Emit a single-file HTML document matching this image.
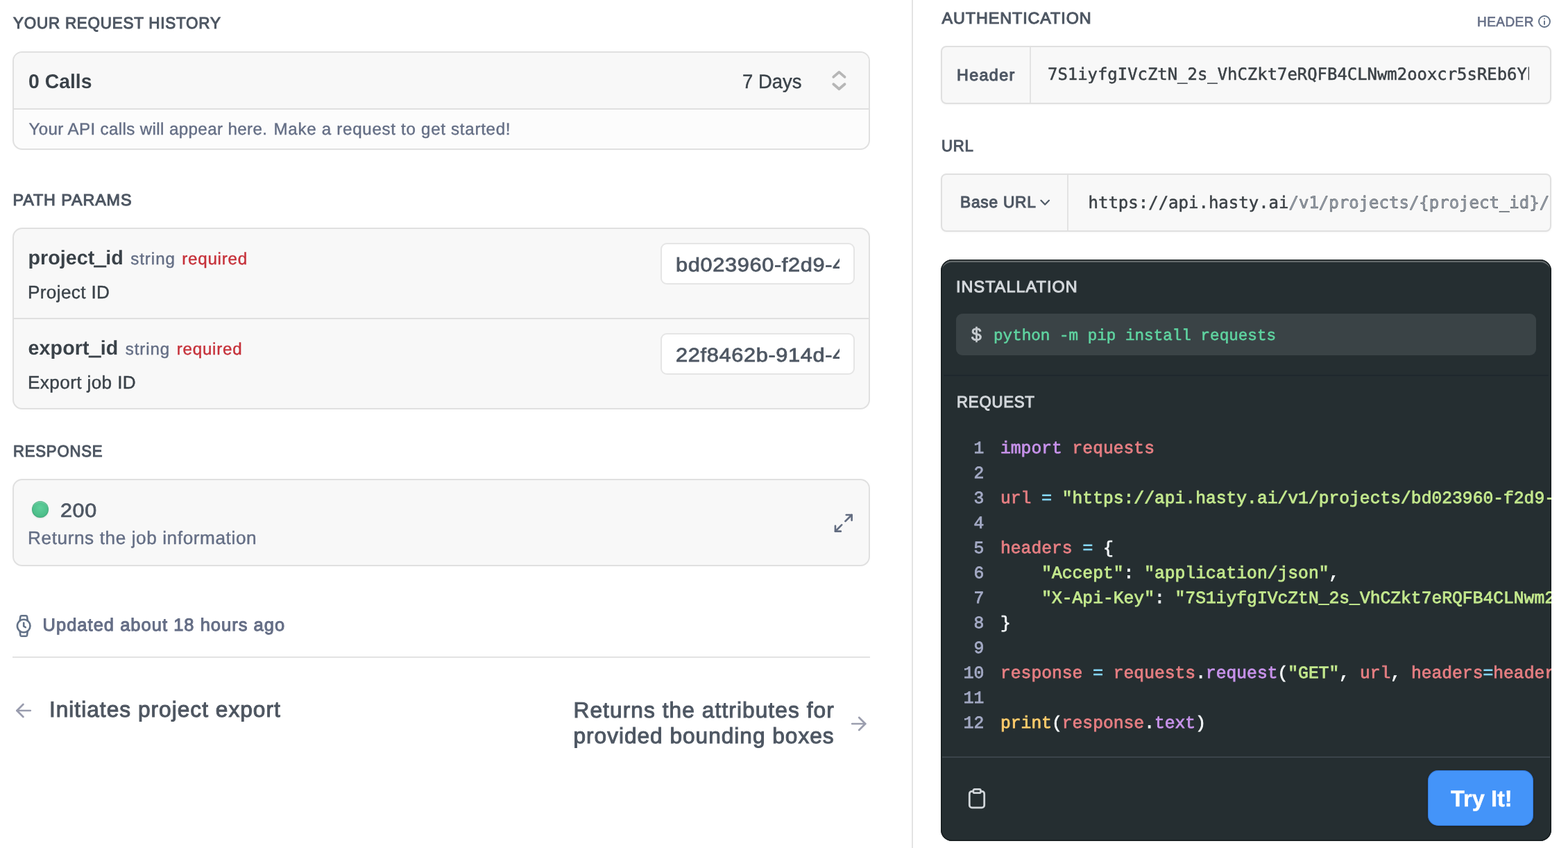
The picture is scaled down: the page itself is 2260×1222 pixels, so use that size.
<!DOCTYPE html>
<html lang="en">
<head>
<meta charset="utf-8">
<title>Returns the job information</title>
<style>
*{box-sizing:border-box;margin:0;padding:0}
html,body{width:2260px;height:1222px;overflow:hidden;background:#fff}
body{position:relative;font-family:"Liberation Sans",sans-serif;color:#384248;-webkit-font-smoothing:antialiased;text-rendering:geometricPrecision}
.a{position:absolute;white-space:nowrap;line-height:1}
.mono{font-family:"Liberation Mono",monospace}
.dmono{font-family:"DejaVu Sans Mono","Liberation Mono",monospace}
.card{position:absolute;left:18px;width:1236px;border:2px solid #e0e0e0;border-radius:14px;background:#f8f8f8;overflow:hidden}
.box{position:absolute;left:1356px;width:880px;height:84px;border:2px solid #e0e0e0;border-radius:8px;box-shadow:0 1px 3px rgba(0,0,0,.04);background:#f8f8f8;overflow:hidden}
.inp{position:absolute;left:952px;width:280px;height:60px;border:2px solid #e5e5e5;border-radius:9px;background:#fff}
.clip{position:absolute;overflow:hidden}
svg{position:absolute;overflow:visible}
#panel{position:absolute;left:1356px;top:374px;width:880px;height:838px;border-radius:16px;background:#252e31;overflow:hidden;box-shadow:inset 0 0 0 1.5px #161c1e, inset 0 4px 0 0 rgba(255,255,255,.27)}
.ln,.cl{position:absolute;font-family:"Liberation Mono",monospace;font-size:24.67px;line-height:36px;height:36px;white-space:pre;-webkit-text-stroke:.8px currentColor}
.ln{left:0;width:62.3px;text-align:right;color:#a3a9c4}
.cl{left:86px;color:#f4f8fa}
.k{color:#c792ea}.v{color:#e57e82}.o{color:#89ddff}.s{color:#c3e88d}.d{color:#ffcb6b}
</style>
</head>
<body>
<div id="root" style="position:absolute;left:0;top:0;width:2260px;height:1222px;will-change:transform">

<!-- ============ LEFT COLUMN ============ -->
<div class="a" id="h1" style="left:19.31px;top:22.00px;font-size:23.36px;color:#4e5763;letter-spacing:0.802px;transform:scaleX(0.9604);transform-origin:0 0;-webkit-text-stroke:1.07px #4e5763;">YOUR REQUEST HISTORY</div>
<div class="card" style="top:74px;height:142px;background:#fcfcfc">
  <div style="position:absolute;left:0;top:0;width:100%;height:82px;background:#f8f8f8;border-bottom:2px solid #e0e0e0"></div>
</div>
<div class="a" id="calls" style="left:40.51px;top:104.00px;font-size:28.7px;font-weight:700;color:#3a4249;transform:scaleX(0.9885);transform-origin:0 0;">0 Calls</div>
<div class="a" id="days" style="left:1069.97px;top:103.00px;font-size:28.23px;color:#3a4249;transform:scaleX(0.9728);transform-origin:0 0;-webkit-text-stroke:0.4px #3a4249;">7 Days</div>
<svg style="left:1197px;top:99px" width="25" height="34" viewBox="0 0 25 34" fill="none" stroke="#b6b6b6" stroke-width="3.8" stroke-linecap="round" stroke-linejoin="round"><path d="M4.3 11.9 L12.4 4.9 L20.5 11.9"/><path d="M4.3 22.2 L12.4 29.2 L20.5 22.2"/></svg>
<div class="a" id="api1" style="left:41.40px;top:175.00px;font-size:24.13px;color:#646e85;letter-spacing:0.384px;-webkit-text-stroke:0.4px #646e85;">Your API calls will appear here.</div><div class="a" id="api2" style="left:394.50px;top:175.00px;font-size:24.13px;color:#646e85;letter-spacing:0.707px;-webkit-text-stroke:0.4px #646e85;">Make a request to get started!</div>

<div class="a" id="h2" style="left:18.54px;top:277.00px;font-size:23.36px;color:#4e5763;letter-spacing:0.877px;-webkit-text-stroke:1.07px #4e5763;">PATH PARAMS</div>
<div class="card" style="top:328px;height:262px">
  <div style="position:absolute;left:0;top:128px;width:100%;height:2px;background:#e0e0e0"></div>
</div>
<div class="a" id="pn1" style="left:40.50px;top:358.00px;font-size:28.7px;font-weight:700;color:#3a4249;letter-spacing:0.020px;">project<span style="-webkit-text-stroke:1.7px #3a4249">_</span>id</div><div class="a" id="pt1" style="left:188.20px;top:362.00px;font-size:24.13px;color:#646e85;letter-spacing:0.955px;-webkit-text-stroke:0.4px #646e85;">string</div><div class="a" id="pr1" style="left:262.20px;top:362.00px;font-size:24.13px;color:#c6313a;letter-spacing:0.786px;-webkit-text-stroke:0.4px #c6313a;">required</div><div class="a" id="pd1" style="left:40.00px;top:408.00px;font-size:26.18px;color:#3a4249;letter-spacing:0.334px;-webkit-text-stroke:0.4px #3a4249;">Project ID</div>
<div class="a" id="pn2" style="left:40.50px;top:488.00px;font-size:28.7px;font-weight:700;color:#3a4249;letter-spacing:0.081px;">export<span style="-webkit-text-stroke:1.7px #3a4249">_</span>id</div><div class="a" id="pt2" style="left:180.70px;top:492.00px;font-size:24.13px;color:#646e85;letter-spacing:0.905px;-webkit-text-stroke:0.4px #646e85;">string</div><div class="a" id="pr2" style="left:254.70px;top:492.00px;font-size:24.13px;color:#c6313a;letter-spacing:0.786px;-webkit-text-stroke:0.4px #c6313a;">required</div><div class="a" id="pd2" style="left:40.00px;top:538.00px;font-size:26.18px;color:#3a4249;letter-spacing:0.368px;-webkit-text-stroke:0.4px #3a4249;">Export job ID</div>
<div class="inp" style="top:350px"></div>
<div class="inp" style="top:480px"></div>
<div class="clip" style="left:965px;top:355px;width:245px;height:50px"><div class="a" id="in1" style="left:9.34px;top:13.00px;font-size:27.77px;color:#4e5763;letter-spacing:0.600px;transform:scaleX(1.1061);transform-origin:0 0;-webkit-text-stroke:0.8px #4e5763;">bd023960-f2d9-4b6c-a1f7-3e5d8c9b2a10</div></div>
<div class="clip" style="left:965px;top:485px;width:245px;height:50px"><div class="a" id="in2" style="left:9.34px;top:13.00px;font-size:27.77px;color:#4e5763;letter-spacing:0.600px;transform:scaleX(1.1061);transform-origin:0 0;-webkit-text-stroke:0.8px #4e5763;">22f8462b-914d-4e2a-b3c8-7d1f6a9e0c54</div></div>

<div class="a" id="h3" style="left:19.06px;top:639.00px;font-size:23.36px;color:#4e5763;letter-spacing:0.802px;transform:scaleX(0.9487);transform-origin:0 0;-webkit-text-stroke:1.07px #4e5763;">RESPONSE</div>
<div class="card" style="top:690px;height:126px"></div>
<div class="a" style="left:46px;top:722px;width:24px;height:24px;border-radius:50%;background:radial-gradient(circle at 50% 40%,#5fcf9b 0%,#4fc08c 55%,#43b07e 100%);box-shadow:0 1px 2px rgba(0,0,0,.12), inset 0 0 0 1px rgba(40,140,95,.35), inset 0 2px 1px rgba(255,255,255,.25)"></div>
<div class="a" id="c200" style="left:86.80px;top:722.00px;font-size:27.86px;color:#4e5763;letter-spacing:0.540px;transform:scaleX(1.0954);transform-origin:0 0;-webkit-text-stroke:0.72px #4e5763;">200</div>
<div class="a" id="rdesc" style="left:40.00px;top:762.00px;font-size:26.18px;color:#646e85;letter-spacing:0.591px;-webkit-text-stroke:0.4px #646e85;">Returns the job information</div>
<svg style="left:1200.2px;top:737.6px" width="31.6" height="31.6" viewBox="0 0 24 24" fill="none" stroke="#626c80" stroke-width="2" stroke-linecap="round" stroke-linejoin="round"><path d="M15 3h6v6"/><path d="M9 21H3v-6"/><path d="M21 3l-7 7"/><path d="M3 21l7-7"/></svg>

<svg style="left:20px;top:884px" width="28" height="36" viewBox="0 0 28 36" fill="none" stroke="#637288" stroke-width="2.6" stroke-linecap="round" stroke-linejoin="round"><circle cx="14.2" cy="18" r="9.3"/><path d="M14.2 13.6v4.8l2.6 1.6"/><path d="M8.6 10.4 L9.4 4.6 Q9.7 3.2 11.2 3.2 H17.2 Q18.7 3.2 19 4.6 L19.8 10.4"/><path d="M8.6 25.6 L9.4 31.4 Q9.7 32.8 11.2 32.8 H17.2 Q18.7 32.8 19 31.4 L19.8 25.6"/></svg>
<div class="a" id="upd" style="left:61.50px;top:889.00px;font-size:25.49px;color:#656e86;letter-spacing:1.025px;-webkit-text-stroke:1.0px #656e86;">Updated about 18 hours ago</div>

<div class="a" style="left:18px;top:946px;width:1236px;height:2px;background:#e3e3e3"></div>

<svg style="left:20.4px;top:1009.6px" width="28" height="28" viewBox="0 0 28 28" fill="none" stroke="#999cae" stroke-width="2.7" stroke-linecap="round" stroke-linejoin="round"><path d="M23.8 14H4.4"/><path d="M13.4 5 L4.4 14 L13.4 23"/></svg>
<div class="a" id="prev" style="left:70.90px;top:1007.00px;font-size:31.64px;color:#4e5661;letter-spacing:1.022px;-webkit-text-stroke:1.0px #4e5661;">Initiates project export</div>
<div class="a" id="next1" style="left:826.50px;top:1008.00px;font-size:31.64px;color:#4e5763;letter-spacing:1.089px;-webkit-text-stroke:1.0px #4e5763;">Returns the attributes for</div>
<div class="a" id="next2" style="left:826.50px;top:1045.00px;font-size:31.64px;color:#4e5763;letter-spacing:0.984px;-webkit-text-stroke:1.0px #4e5763;">provided bounding boxes</div>
<svg style="left:1224px;top:1028.6px" width="28" height="28" viewBox="0 0 28 28" fill="none" stroke="#9b9eae" stroke-width="2.7" stroke-linecap="round" stroke-linejoin="round"><path d="M4.2 14H23.2"/><path d="M14.2 5 L23.2 14 L14.2 23"/></svg>

<!-- column divider -->
<div class="a" style="left:1314px;top:0;width:2px;height:1222px;background:#e3e3e3"></div>

<!-- ============ RIGHT COLUMN ============ -->
<div class="a" id="h4" style="left:1357.54px;top:15.00px;font-size:23.36px;color:#4e5763;letter-spacing:0.903px;-webkit-text-stroke:1.07px #4e5763;">AUTHENTICATION</div>
<div class="a" id="hdr" style="left:2129.03px;top:23.00px;font-size:19.8px;color:#656e86;letter-spacing:0.450px;transform:scaleX(0.9619);transform-origin:0 0;-webkit-text-stroke:0.6px #656e86;">HEADER</div>
<svg style="left:2216px;top:21px" width="20" height="20" viewBox="0 0 20 20" fill="none" stroke="#637288" stroke-width="1.9" stroke-linecap="round"><circle cx="10" cy="10" r="8"/><path d="M10 9.4v4.6"/><path d="M10 6v.1"/></svg>

<div class="box" style="top:66px">
  <div style="position:absolute;left:126px;top:0;width:2px;height:100%;background:#e3e3e3"></div>
</div>
<div class="a" id="lhdr" style="left:1379.04px;top:97.00px;font-size:23.36px;color:#4e5763;letter-spacing:1.319px;-webkit-text-stroke:1.07px #4e5763;">Header</div>
<div class="clip dmono" style="left:1500px;top:80px;width:704px;height:56px"><div class="a" id="key" style="left:10px;top:15.5px;font-size:23.92px;color:#3b4146;-webkit-text-stroke:.5px #3b4146">7S1iyfgIVcZtN_2s_VhCZkt7eRQFB4CLNwm2ooxcr5sREb6YhP3kWq</div></div>

<div class="a" id="h5" style="left:1356.56px;top:199.00px;font-size:23.36px;color:#4e5763;letter-spacing:0.802px;transform:scaleX(0.9501);transform-origin:0 0;-webkit-text-stroke:1.07px #4e5763;">URL</div>
<div class="box" style="top:250px">
  <div style="position:absolute;left:180px;top:0;width:2px;height:100%;background:#e3e3e3"></div>
</div>
<div class="a" id="burl" style="left:1383.55px;top:280.00px;font-size:23.36px;color:#4e5763;letter-spacing:0.802px;transform:scaleX(0.9718);transform-origin:0 0;-webkit-text-stroke:1.07px #4e5763;">Base URL</div>
<svg style="left:1497px;top:284px" width="18" height="16" viewBox="0 0 18 16" fill="none" stroke="#4f5a66" stroke-width="2.2" stroke-linecap="round" stroke-linejoin="round"><path d="M3.4 4.8 L9.2 10.8 L15 4.8"/></svg>
<div class="clip dmono" style="left:1560px;top:264px;width:674px;height:56px"><div class="a" id="url" style="left:8.5px;top:15.5px;font-size:24px;color:#3b4146;-webkit-text-stroke:.5px #3b4146">https://api.hasty.ai<span style="color:#9ba3af">/v1/projects/{project_id}/exports/{export_id}</span></div></div>

<div id="panel">
  <div class="a" style="left:22px;top:77.5px;width:836px;height:60.5px;border-radius:9px;background:#3a4346"></div>
  <div class="a" style="left:4px;top:166px;width:872px;height:1.5px;background:#1f282d"></div>
  <div class="a mono" id="pip" style="left:76px;top:98.6px;font-size:22.62px;color:#5fd3a0;-webkit-text-stroke:.6px #5fd3a0">python -m pip install requests</div>

  <div class="ln" style="top:255px">1</div><div class="cl" id="l1" style="top:255px"><span class="k">import</span> <span class="v">requests</span></div>
  <div class="ln" style="top:291px">2</div>
  <div class="ln" style="top:327px">3</div><div class="cl" id="l3" style="top:327px"><span class="v">url</span> <span class="o">=</span> <span class="s">"https://api.hasty.ai/v1/projects/bd023960-f2d9-4b6c-a1f7-3e5d8c9b2a10/exports/22f8462b-914d-4e2a-b3c8-7d1f6a9e0c54"</span></div>
  <div class="ln" style="top:363px">4</div>
  <div class="ln" style="top:399px">5</div><div class="cl" id="l5" style="top:399px"><span class="v">headers</span> <span class="o">=</span> {</div>
  <div class="ln" style="top:435px">6</div><div class="cl" id="l6" style="top:435px">    <span class="s">"Accept"</span>: <span class="s">"application/json"</span>,</div>
  <div class="ln" style="top:471px">7</div><div class="cl" id="l7" style="top:471px">    <span class="s">"X-Api-Key"</span>: <span class="s">"7S1iyfgIVcZtN_2s_VhCZkt7eRQFB4CLNwm2ooxcr5sREb6YhP3kWq"</span></div>
  <div class="ln" style="top:507px">8</div><div class="cl" id="l8" style="top:507px">}</div>
  <div class="ln" style="top:543px">9</div>
  <div class="ln" style="top:579px">10</div><div class="cl" id="l10" style="top:579px"><span class="v">response</span> <span class="o">=</span> <span class="v">requests</span>.<span class="k">request</span>(<span class="s">"GET"</span>, <span class="v">url</span>, <span class="v">headers</span><span class="o">=</span><span class="v">headers</span>)</div>
  <div class="ln" style="top:615px">11</div>
  <div class="ln" style="top:651px">12</div><div class="cl" id="l12" style="top:651px"><span class="d">print</span>(<span class="v">response</span>.<span class="k">text</span>)</div>

  <div class="a" style="left:2px;top:716px;width:876px;height:2px;background:#3b444a"></div>
  <svg style="left:36px;top:758px" width="32" height="36" viewBox="0 0 32 36" fill="none" stroke="#d0d5d9" stroke-width="2.8" stroke-linejoin="round"><rect x="5.3" y="8.3" width="21.4" height="23.6" rx="3.6"/><rect x="10.8" y="5.3" width="10.7" height="5.4" rx="2" fill="#252e31"/></svg>
  <div class="a" style="left:702px;top:736px;width:152px;height:80px;border-radius:15px;background:#4494f9;box-shadow:inset 0 0 0 1px rgba(30,90,190,.45), 0 1px 3px rgba(0,0,0,.25)"></div>
</div>
<div class="a" id="h6" style="left:1378.04px;top:402.00px;font-size:23.36px;color:#d3d7db;letter-spacing:1.079px;-webkit-text-stroke:1.07px #d3d7db;">INSTALLATION</div>
<div class="a" id="dollar" style="left:1399.65px;top:469.00px;font-size:26.67px;color:#c8cdd1;letter-spacing:0.600px;transform:scaleX(0.9968);transform-origin:0 0;-webkit-text-stroke:0.8px #c8cdd1;">$</div>
<div class="a" id="h7" style="left:1379.06px;top:568.00px;font-size:23.36px;color:#d3d7db;letter-spacing:0.802px;transform:scaleX(0.9508);transform-origin:0 0;-webkit-text-stroke:1.07px #d3d7db;">REQUEST</div>
<div class="a" id="tryit" style="left:2091.25px;top:1135.00px;font-size:32.8px;font-weight:700;color:#ffffff;transform:scaleX(0.9928);transform-origin:0 0;-webkit-text-stroke:0.4px #ffffff;">Try It!</div>

</div>
</body>
</html>
